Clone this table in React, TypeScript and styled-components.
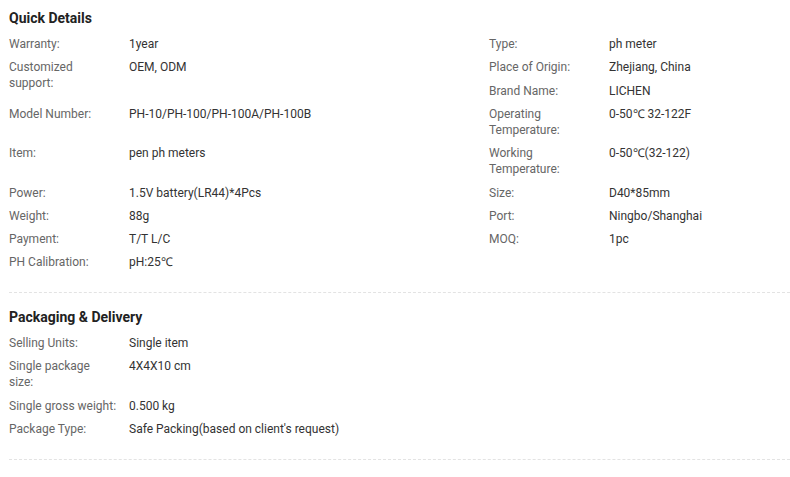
import styled, { createGlobalStyle } from "styled-components";

interface Detail {
  label: string;
  value: string;
  tall?: boolean;
}

const GlobalStyle = createGlobalStyle`
  html, body {
    margin: 0;
    padding: 0;
    background: #ffffff;
  }

  body {
    font-family: Roboto, "Liberation Sans", Arial, sans-serif;
  }
`;

const Page = styled.div`
  padding-left: 9px;
`;

const Section = styled.section<{ first?: boolean }>`
  padding: ${(props) => (props.first ? "8px" : "14px")} 0 18px 0;
  border-bottom: 1px dashed #e3e3e3;
`;

const Title = styled.h3`
  margin: 0 0 4.33px 0;
  font-size: 14px;
  line-height: 20px;
  font-weight: 700;
  color: #222222;
`;

const List = styled.div<{ cols: number }>`
  display: grid;
  grid-template-columns: ${(props) => (props.cols > 1 ? "480px 1fr" : "480px")};
  align-items: start;
`;

const Item = styled.div<{ tall?: boolean }>`
  display: flex;
  padding: 3.67px 0;
  font-size: 12px;
  line-height: 16px;
  grid-row: ${(props) => (props.tall ? "span 2" : "auto")};
`;

const Label = styled.div`
  flex: 0 0 120px;
  padding-right: 12.3px;
  box-sizing: border-box;
  color: #666666;
`;

const Value = styled.div`
  flex: 1;
  color: #333333;
`;

const quickDetails: Detail[] = [
  { label: "Warranty:", value: "1year" },
  { label: "Type:", value: "ph meter" },
  { label: "Customized support:", value: "OEM, ODM", tall: true },
  { label: "Place of Origin:", value: "Zhejiang, China" },
  { label: "Brand Name:", value: "LICHEN" },
  { label: "Model Number:", value: "PH-10/PH-100/PH-100A/PH-100B" },
  { label: "Operating Temperature:", value: "0-50℃ 32-122F" },
  { label: "Item:", value: "pen ph meters" },
  { label: "Working Temperature:", value: "0-50℃(32-122)" },
  { label: "Power:", value: "1.5V battery(LR44)*4Pcs" },
  { label: "Size:", value: "D40*85mm" },
  { label: "Weight:", value: "88g" },
  { label: "Port:", value: "Ningbo/Shanghai" },
  { label: "Payment:", value: "T/T L/C" },
  { label: "MOQ:", value: "1pc" },
  { label: "PH Calibration:", value: "pH:25℃" },
];

const packaging: Detail[] = [
  { label: "Selling Units:", value: "Single item" },
  { label: "Single package size:", value: "4X4X10 cm" },
  { label: "Single gross weight:", value: "0.500 kg" },
  { label: "Package Type:", value: "Safe Packing(based on client's request)" },
];

const DetailList = ({ items, cols }: { items: Detail[]; cols: number }) => (
  <List cols={cols}>
    {items.map((item) => (
      <Item key={item.label} tall={item.tall}>
        <Label>{item.label}</Label>
        <Value>{item.value}</Value>
      </Item>
    ))}
  </List>
);

const App = () => {
  return (
    <>
      <GlobalStyle />
      <Page>
        <Section first>
          <Title>Quick Details</Title>
          <DetailList items={quickDetails} cols={2} />
        </Section>
        <Section>
          <Title>Packaging &amp; Delivery</Title>
          <DetailList items={packaging} cols={1} />
        </Section>
      </Page>
    </>
  );
};

export default App;
